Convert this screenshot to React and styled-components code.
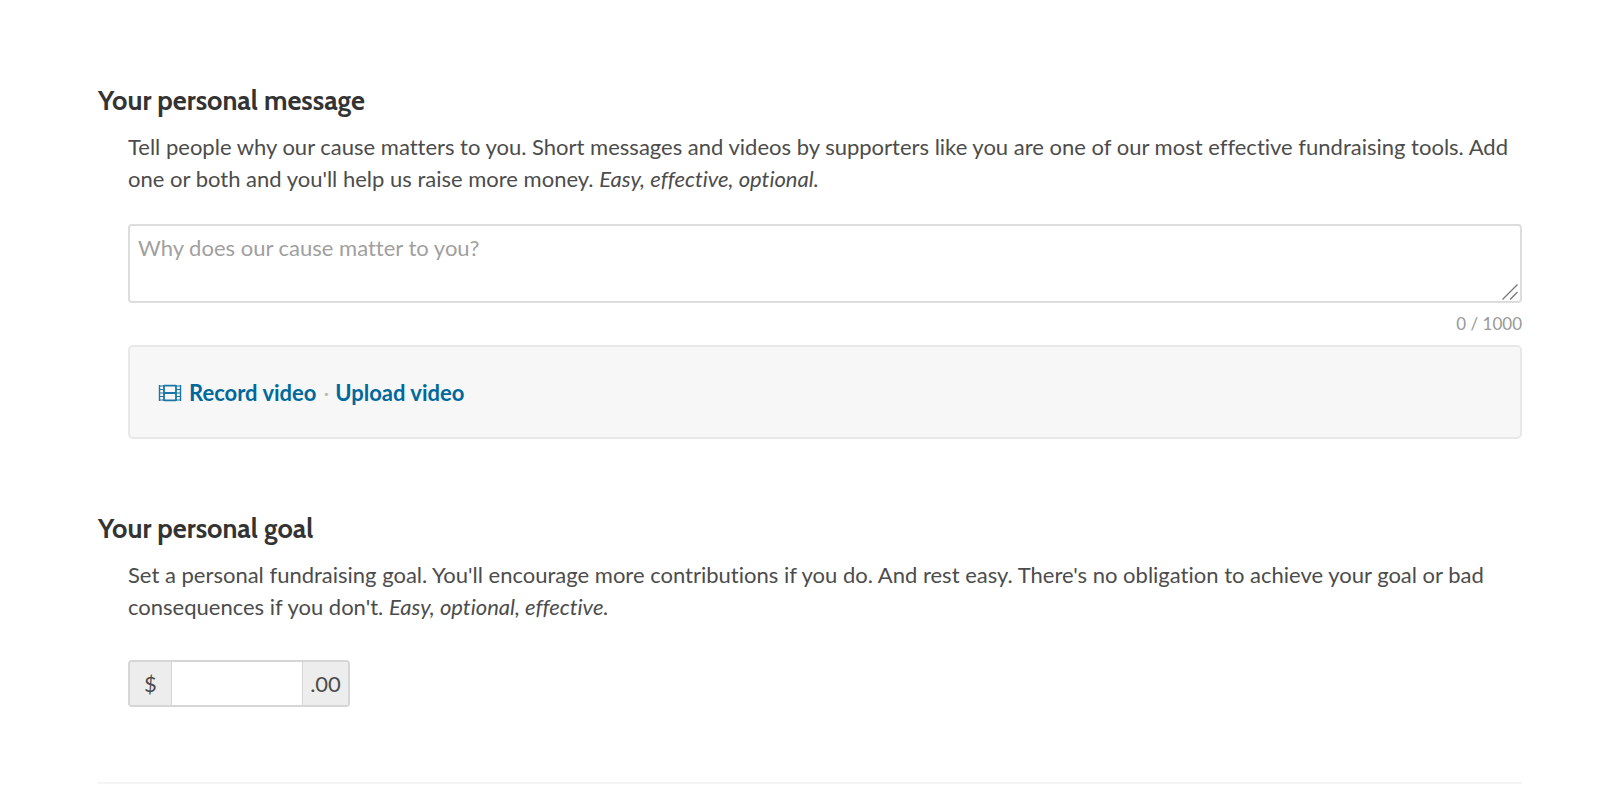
import React from 'react';
import styled, { createGlobalStyle } from 'styled-components';

const GlobalStyle = createGlobalStyle`
  * { box-sizing: border-box; }
  body {
    margin: 0;
    background: #fff;
    color: #4c4c4c;
    font: 22px/32px Lato, sans-serif;
    font-variant-ligatures: none;
  }
`;

const Page = styled.main`
  padding: 84px 78px 20px 98px;
`;

const Section = styled.section`
  padding-bottom: 73px;
`;

const Title = styled.h2`
  margin: 0 0 13px;
  font: 700 27px/34px Cabin, Lato, sans-serif;
  color: #333;
`;

const Body = styled.div`
  padding-left: 30px;
`;

const Text = styled.p`
  margin: 0 0 29px;
`;

const MessageField = styled.div`
  position: relative;
`;

const Message = styled.textarea`
  display: block;
  width: 100%;
  height: 79px;
  padding: 6px 8px;
  border: 2px solid #ddd;
  border-radius: 4px;
  font: inherit;
  font-variant-ligatures: none;
  color: inherit;
  resize: vertical;

  &::placeholder { color: #a0a0a0; }
  &::-webkit-resizer { background: transparent; }
`;

const Grip = styled.svg`
  position: absolute;
  right: 2px;
  bottom: 2px;
  width: 18px;
  height: 18px;
  pointer-events: none;
`;

const Counter = styled.div`
  margin: 7px 0;
  font-size: 17px;
  line-height: 28px;
  text-align: right;
  color: #999;
`;

const VideoBox = styled.div`
  display: flex;
  align-items: center;
  height: 94px;
  padding: 2px 28px 0;
  background: #f7f7f7;
  border: 2px solid #e8e8e8;
  border-radius: 5px;
`;

const Link = styled.a`
  color: #00699b;
  font-weight: 700;
  text-decoration: none;
`;

const Dot = styled.span`
  margin: 0 6px 0 7px;
  color: #bbb;
`;

const Film = styled.svg`
  width: 24px;
  height: 18px;
  margin-right: 7px;
`;

const Amount = styled.div`
  display: flex;
  width: fit-content;
  height: 47px;
  margin-top: 37px;
  border: 2px solid #d6d6d6;
  border-radius: 4px;
  overflow: hidden;
`;

const Addon = styled.label`
  display: flex;
  align-items: center;
  justify-content: center;
  width: ${({ $wide }) => ($wide ? 45 : 41)}px;
  background: #ededed;
`;

const Input = styled.input`
  width: 132px;
  padding: 0 9px;
  border: solid #d6d6d6;
  border-width: 0 1px;
  color: inherit;
  font: inherit;
`;

const Rule = styled.hr`
  margin: 2px 0 0;
  border: 0;
  border-top: 2px solid #f4f4f4;
`;

function FilmIcon() {
  return (
    <Film viewBox="0 0 24 18" fill="none" stroke="#1b76a5" aria-hidden="true">
      <path d="M1.5 1v16M22.5 1v16" strokeWidth="1.4" />
      <path d="M6 1v16M18 1v16M6 1.7h12M6 9h12M6 16.3h12" strokeWidth="1.8" />
      <path d="M1 2h5M1 5.5h5M1 9h5M1 12.5h5M1 16h5M18 2h5M18 5.5h5M18 9h5M18 12.5h5M18 16h5" strokeWidth="1.2" />
    </Film>
  );
}

export default function App() {
  return (
    <Page>
      <GlobalStyle />
      <Section>
        <Title id="message-title">Your personal message</Title>
        <Body>
          <Text>
            Tell people why our cause matters to you. Short messages and videos by supporters like you are one of our
            most effective fundraising tools. Add one or both and you'll help us raise more money.{' '}
            <em>Easy, effective, optional.</em>
          </Text>
          <MessageField>
            <Message aria-labelledby="message-title" placeholder="Why does our cause matter to you?" />
            <Grip viewBox="0 0 18 18" fill="none" stroke="#777" strokeWidth="1.3" aria-hidden="true">
              <path d="M0.5 16.5L15.5 1.5M8 16.5L15.5 9" />
            </Grip>
          </MessageField>
          <Counter>0 / 1000</Counter>
          <VideoBox>
            <FilmIcon />
            <Link href="#record">Record video</Link>
            <Dot>·</Dot>
            <Link href="#upload">Upload video</Link>
          </VideoBox>
        </Body>
      </Section>
      <Section>
        <Title id="goal-title">Your personal goal</Title>
        <Body>
          <Text>
            Set a personal fundraising goal. You'll encourage more contributions if you do. And rest easy. There's no
            obligation to achieve your goal or bad consequences if you don't. <em>Easy, optional, effective.</em>
          </Text>
          <Amount>
            <Addon htmlFor="goal">$</Addon>
            <Input id="goal" type="text" inputMode="numeric" aria-labelledby="goal-title" />
            <Addon htmlFor="goal" $wide>.00</Addon>
          </Amount>
        </Body>
      </Section>
      <Rule />
    </Page>
  );
}
